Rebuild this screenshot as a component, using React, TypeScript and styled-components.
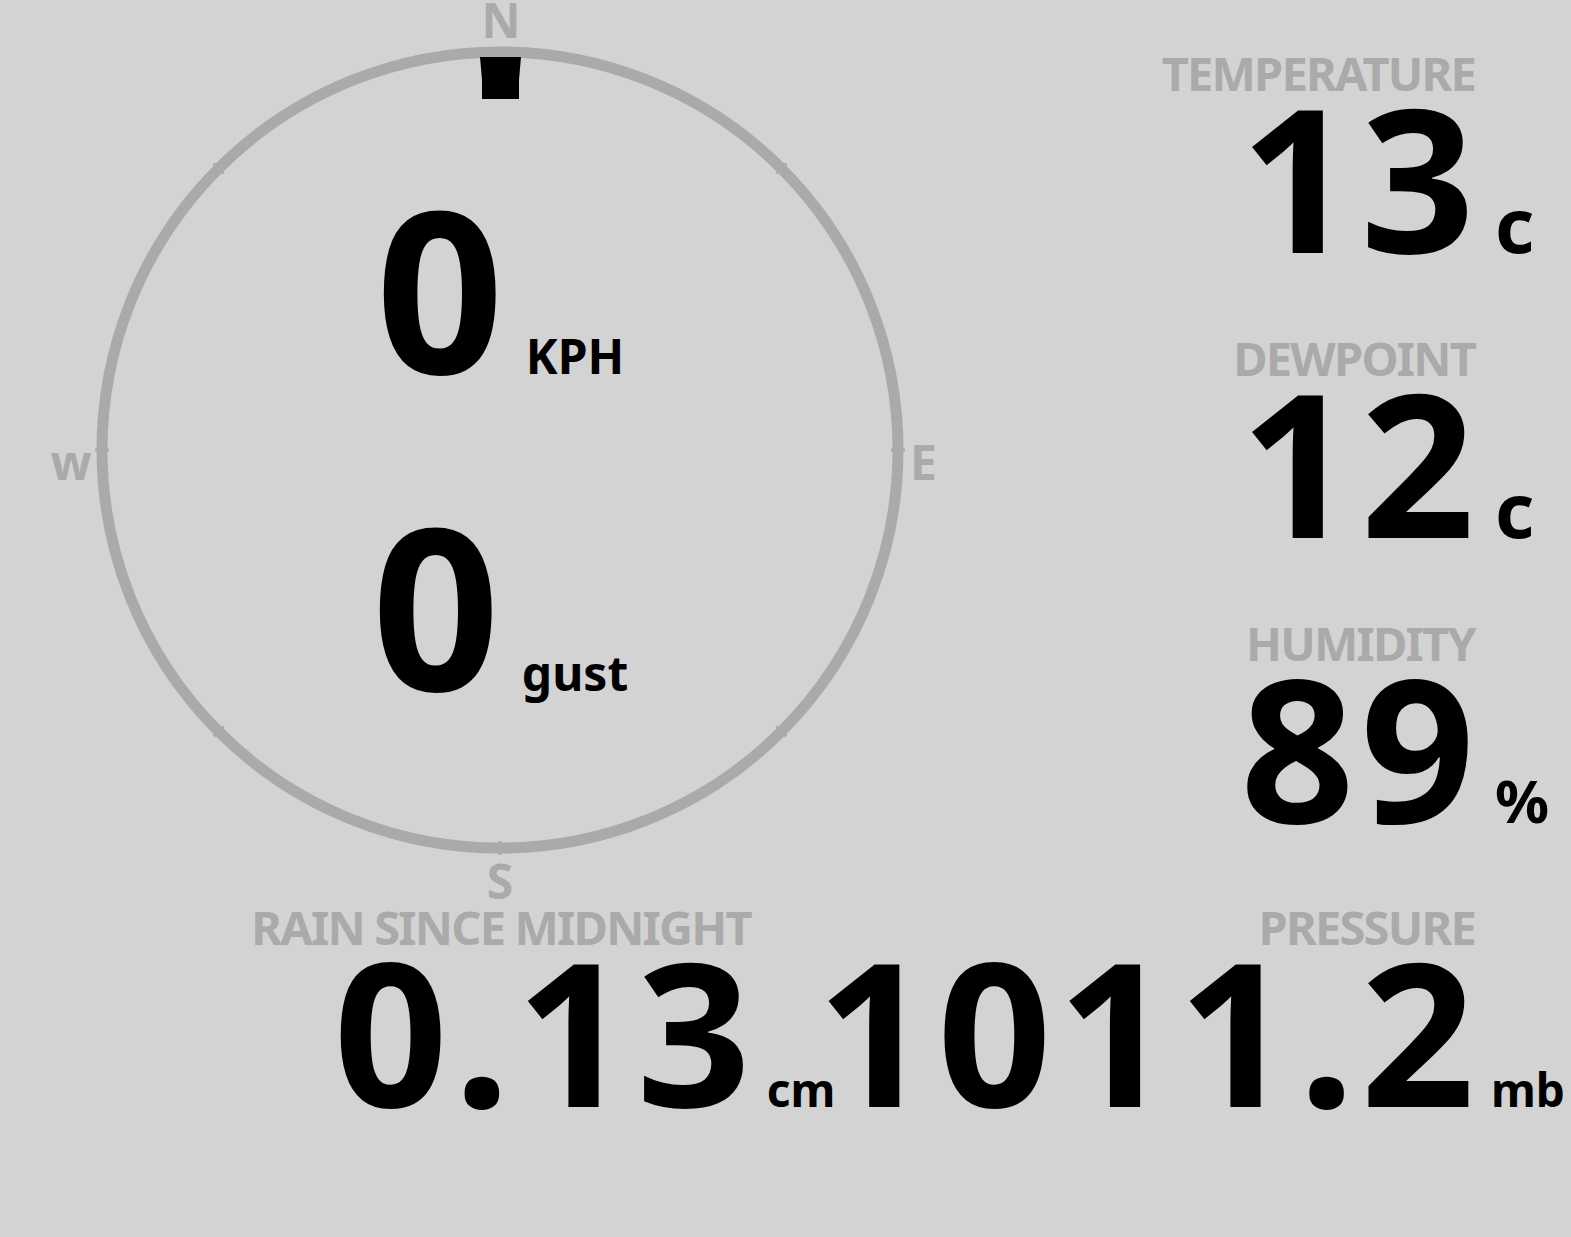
import React from 'react';
import styled, { createGlobalStyle } from 'styled-components';

type ReadingData = {
    label: string;
    value: string;
    unit: string;
    unitSize: number;
};

const readings: ReadingData[] = [
    { label: 'TEMPERATURE', value: '13', unit: 'c', unitSize: 76 },
    { label: 'DEWPOINT', value: '12', unit: 'c', unitSize: 76 },
    { label: 'HUMIDITY', value: '89', unit: '%', unitSize: 60 },
];

const CX = 500;
const CY = 450;
const R = 398;

const Compass = () => {
    // little notches every 45 degrees round the ring
    const ticks = [45, 90, 135, 180, 225, 270, 315].map(deg => {
        const a = (deg * Math.PI) / 180;
        const x1 = CX + Math.sin(a) * (R - 7);
        const y1 = CY - Math.cos(a) * (R - 7);
        const x2 = CX + Math.sin(a) * (R + 7);
        const y2 = CY - Math.cos(a) * (R + 7);
        return <line key={deg} x1={x1} y1={y1} x2={x2} y2={y2} stroke="#aaaaaa" strokeWidth={3} />;
    });

    return (
        <CompassBox>
            <Dial viewBox="0 0 1000 903" width={1000} height={903}>
                <circle cx={CX} cy={CY} r={R} fill="none" stroke="#aaaaaa" strokeWidth={11} />
                {ticks}
                <polygon points="480,57 521,57 519,80 519,99 482,99 482,80" fill="#000" />
                <Point x={910} y={480} textAnchor="start">E</Point>
                <Point x={71} y={480} textAnchor="middle">w</Point>
            </Dial>
            <North>N</North>
            <South>S</South>
            <Readout>
                <SpeedRow>
                    <SpeedValue>0</SpeedValue>
                    <SpeedUnit>KPH</SpeedUnit>
                </SpeedRow>
                <SpeedRow>
                    <SpeedValue>0</SpeedValue>
                    <SpeedUnit>gust</SpeedUnit>
                </SpeedRow>
            </Readout>
        </CompassBox>
    );
};

const App = () => {
    return (
        <Page>
            <GlobalStyle />
            <TopSection>
                <Compass />
                <ReadingColumn>
                    {readings.map(r => (
                        <Reading key={r.label} $unitWidth={96} $stacked>
                            <Label>{r.label}</Label>
                            <Value>{r.value}</Value>
                            <Unit $size={r.unitSize}>{r.unit}</Unit>
                        </Reading>
                    ))}
                </ReadingColumn>
            </TopSection>
            <BottomSection>
                <Reading $unitWidth={66}>
                    <Label>RAIN SINCE MIDNIGHT</Label>
                    <Value>0.13</Value>
                    <Unit $size={46} $gap={16}>cm</Unit>
                </Reading>
                <Reading $unitWidth={96}>
                    <Label>PRESSURE</Label>
                    <Value>1011.2</Value>
                    <Unit $size={46} $gap={16}>mb</Unit>
                </Reading>
            </BottomSection>
        </Page>
    );
};

const GlobalStyle = createGlobalStyle`
    html, body {
        margin: 0;
        padding: 0;
        background: #d3d3d3;
    }
    body {
        font-family: "Noto Sans", "DejaVu Sans", sans-serif;
        font-weight: 700;
        color: #000;
    }
`;

const Page = styled.div`
    width: 1571px;
    min-height: 1237px;
    background: #d3d3d3;
    overflow: hidden;
`;

const TopSection = styled.div`
    display: grid;
    grid-template-columns: 1000px 1fr;
    height: 903px;
`;

const BottomSection = styled.div`
    display: grid;
    grid-template-columns: 1fr auto;
`;

const CompassBox = styled.div`
    position: relative;
    display: grid;
    width: 1000px;
    height: 903px;
`;

const Dial = styled.svg`
    grid-area: 1 / 1;
    display: block;
`;

const Point = styled.text`
    font-family: "Noto Sans", "DejaVu Sans", sans-serif;
    font-weight: 700;
    font-size: 48px;
    fill: #aaaaaa;
`;

const CardinalLetter = styled.div`
    position: absolute;
    left: 470px;
    width: 60px;
    text-align: center;
    font-size: 48px;
    line-height: 40px;
    color: #aaaaaa;
`;

const North = styled(CardinalLetter)`
    top: 0;
    left: 471px;
`;

const South = styled(CardinalLetter)`
    top: 861px;
`;

const Readout = styled.div`
    grid-area: 1 / 1;
    align-self: center;
    justify-self: center;
    display: flex;
    flex-direction: column;
    padding-bottom: 12px;
`;

const SpeedRow = styled.div`
    display: flex;
    align-items: baseline;
    justify-content: center;
    height: 317px;
`;

const SpeedValue = styled.span`
    font-size: 224px;
    line-height: 317px;
    letter-spacing: 8px;
`;

const SpeedUnit = styled.span`
    font-size: 48px;
    line-height: 1;
    margin-left: 14px;
`;

const ReadingColumn = styled.div`
    display: flex;
    flex-direction: column;
    padding-top: 49px;
`;

const Reading = styled.div<{ $unitWidth: number; $stacked?: boolean }>`
    display: grid;
    grid-template-columns: max-content ${p => p.$unitWidth}px;
    justify-content: end;
    align-content: start;
    height: ${p => (p.$stacked ? '285px' : 'auto')};
`;

const Label = styled.div`
    grid-column: 1;
    grid-row: 1;
    justify-self: end;
    font-size: 47px;
    line-height: 48px;
    letter-spacing: -1.8px;
    color: #aaaaaa;
    white-space: nowrap;
`;

const Value = styled.div`
    grid-column: 1;
    grid-row: 2;
    justify-self: end;
    align-self: baseline;
    font-size: 200px;
    line-height: 150px;
    letter-spacing: 6px;
    margin-right: -6px;
    margin-top: 4px;
    white-space: nowrap;
`;

const Unit = styled.div<{ $size: number; $gap?: number }>`
    grid-column: 2;
    grid-row: 2;
    align-self: baseline;
    font-size: ${p => p.$size}px;
    line-height: 1;
    margin-left: ${p => p.$gap ?? 20}px;
    white-space: nowrap;
`;

export default App;
